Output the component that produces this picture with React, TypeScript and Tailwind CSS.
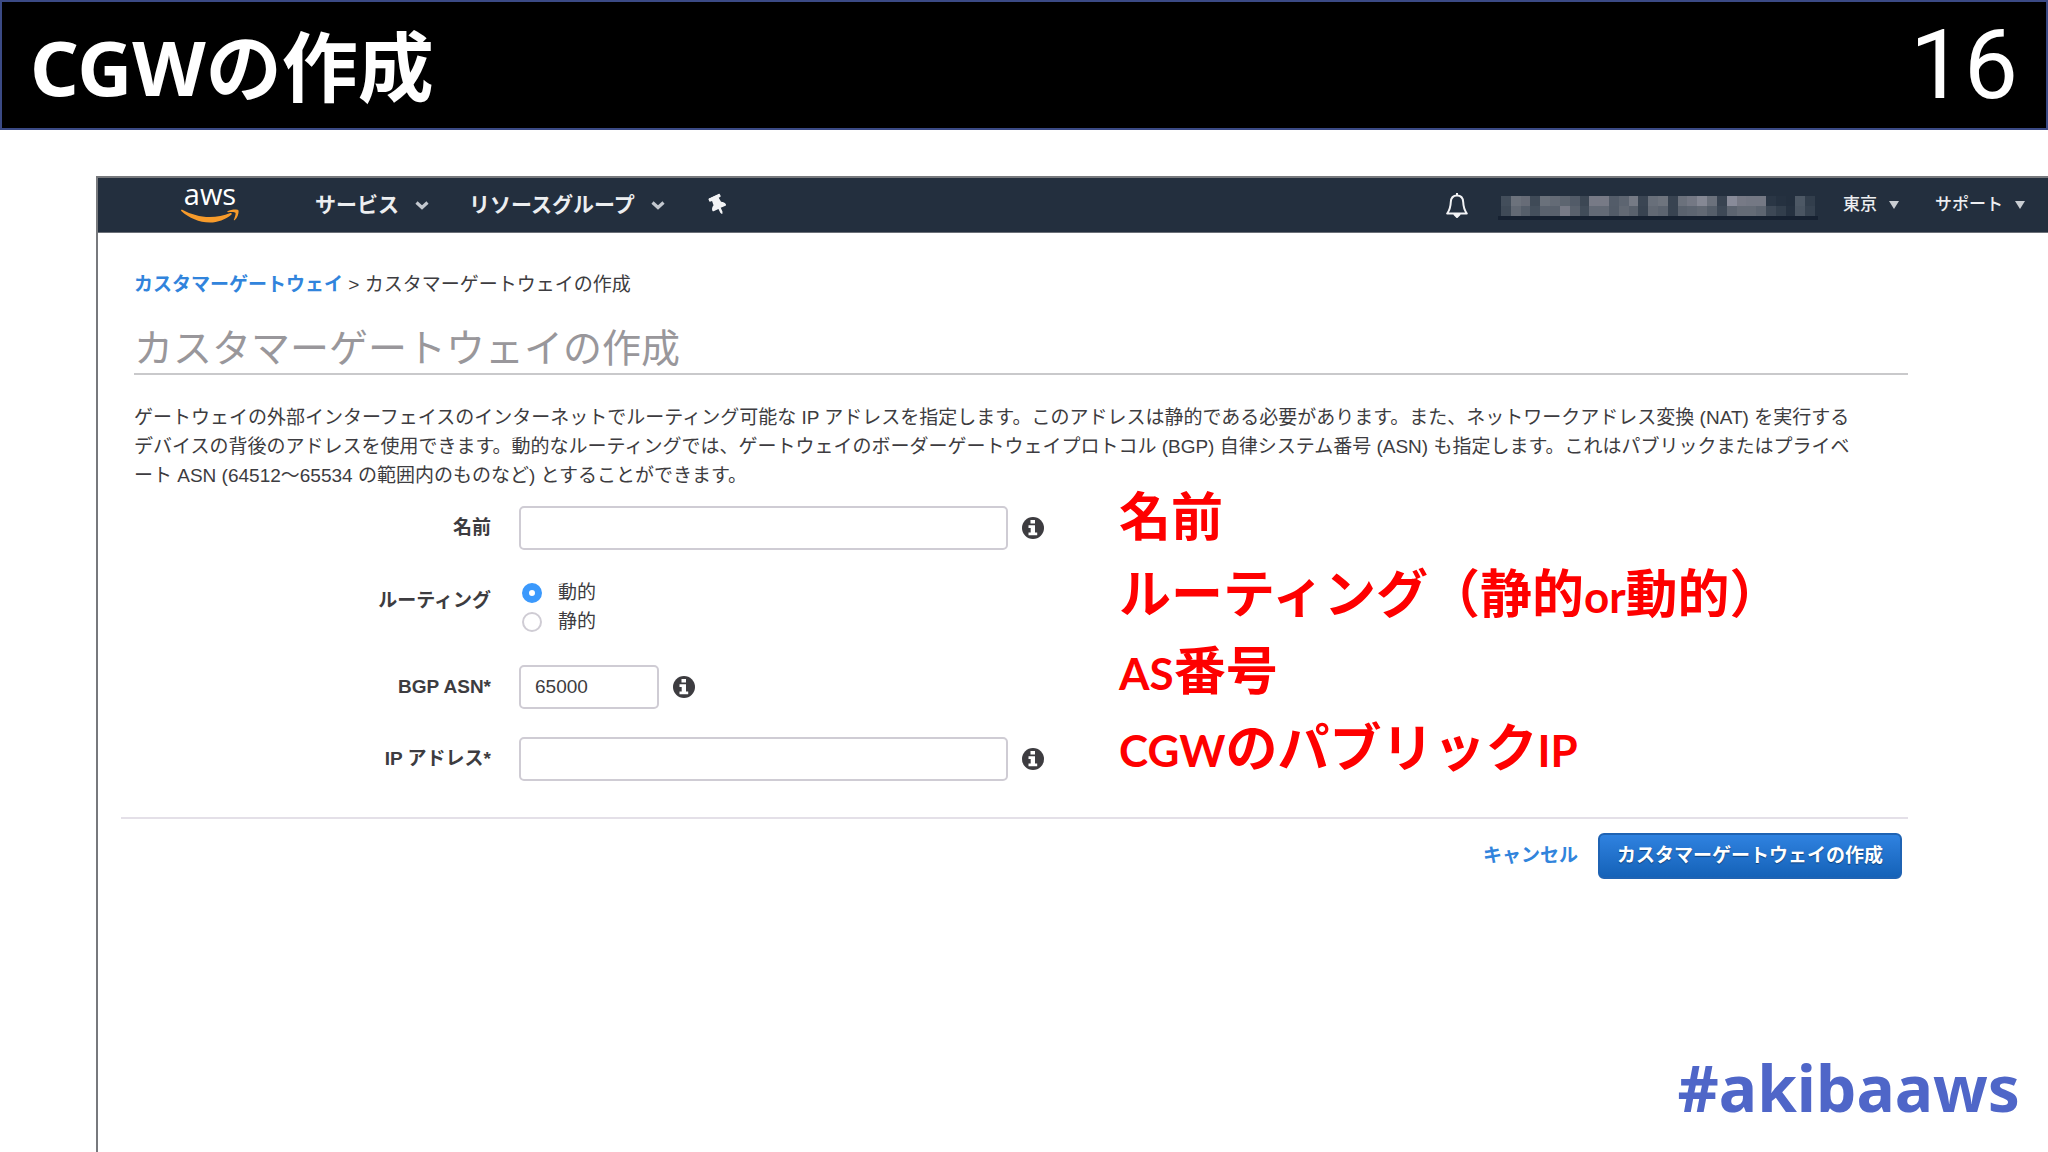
import { useState, type ReactNode } from "react";
import { FaThumbtack } from "react-icons/fa";

const notes: ReactNode[] = [
  "名前",
  <>
    ルーティング（静的<Latin>or</Latin>動的）
  </>,
  <>
    <Latin>AS</Latin>番号
  </>,
  <>
    <Latin>CGW</Latin>のパブリック<Latin>IP</Latin>
  </>
];

// 伏せ字部分のモザイク（上段・下段）
const mosaic = [
  "#434e5b", "#6c727c", "#676c77", "#3f4a57", "#6a717b", "#646b76", "#5d6570", "#525b68",
  "#3c4754", "#777a86", "#777a86", "#535c69", "#5d6571", "#757a85", "#3a4553", "#686f7a",
  "#6e747e", "#384351", "#6b717c", "#747884", "#858894", "#6b717c", "#384351", "#888b99",
  "#777a86", "#747884", "#747884", "#2a3645", "#253140", "#232f3e", "#4d5865", "#323e4c",
  "#3f4a57", "#626974", "#555e6a", "#444f5c", "#5a626e", "#59616d", "#777a86", "#59616d",
  "#414c59", "#636a76", "#636a76", "#525b68", "#626974", "#59616d", "#384351", "#626974",
  "#5c6470", "#384351", "#5a626e", "#5d6571", "#626974", "#555e6a", "#3d4856", "#5c6470",
  "#646b76", "#646b76", "#5d6571", "#3d4856", "#323e4c", "#253140", "#4a5562", "#364250"
];

function Latin({ children }: { children: ReactNode }) {
  return <span className="font-['Lato'] text-[44px] leading-none">{children}</span>;
}

function Chevron() {
  return (
    <svg viewBox="0 0 14 9" className="h-[9px] w-[14px]" fill="none" stroke="#c3c8cf" strokeWidth="3.2">
      <path d="M1.500 1.500 7 6.500l5.500-5" />
    </svg>
  );
}

function Caret() {
  return (
    <svg viewBox="0 0 10 8" className="h-2 w-[10px]" fill="#c9cdd2">
      <path d="M0 0h10L5 8z" />
    </svg>
  );
}

function InfoIcon() {
  return (
    <svg viewBox="0 0 22 22" className="ml-[14px] size-[22px]">
      <circle cx="11" cy="11" r="11" fill="#3d3c40" />
      <path d="M8.500 3h4.500v3.500H8.500zM6.500 8.300H13v7.200h2.200v2.800H6.500v-2.800h2.200v-4.400H6.500z" fill="#fff" />
    </svg>
  );
}

function AwsLogo() {
  return (
    <a href="#" aria-label="aws" className="flex w-[58px] flex-col items-center pb-[6px]">
      <span className="font-['Open_Sans'] text-[29px] leading-[24px] font-medium text-white">aws</span>
      <svg viewBox="0 0 58 14" className="mt-[3px] h-[14px] w-[58px]" fill="#f79b2b">
        <path d="M0 1.200C.3.5 1 .6 1.800 1c8 4.300 17 7 27 7 7 0 14-1.300 20.500-4 1.200-.4 2 .9 1 1.700C44.500 10.500 36.500 13.500 29 13.500 18 13.500 8 9 .5 2.300.1 1.900-.1 1.500 0 1.200z" />
        <path d="M46.500 2.300C49.500.2 56 0 57.200.9c1.200 1.200-.2 7.500-3.400 10.200-.6.5-1.200.2-.9-.5.8-2 2.200-5.900 1.500-6.900-.8-1-4.700-.8-7.300-.5-.8.1-1.100-.5-.6-.9z" />
      </svg>
    </a>
  );
}

function NavBar() {
  return (
    <nav className="flex h-[55px] items-center border-b border-[#6b7078] bg-[#232f3e] pl-[83px] text-[#eceef0]">
      <AwsLogo />
      <button type="button" className="ml-[76px] flex items-center gap-4 text-[21px] font-bold">
        サービス
        <Chevron />
      </button>
      <button type="button" className="ml-10 flex items-center gap-4 text-[21px] font-bold">
        リソースグループ
        <Chevron />
      </button>
      <button type="button" aria-label="pin" className="ml-[43px]">
        <FaThumbtack className="size-5 -rotate-[25deg] text-[#f2f3f5]" />
      </button>
      <div className="ml-auto flex items-center">
        <button type="button" aria-label="bell">
          <svg viewBox="0 0 22 25" className="h-[25px] w-[22px]" fill="none" stroke="#f2f3f5" strokeWidth="2" strokeLinejoin="round">
            <path d="M11 2.500C7 2.500 5 5.500 4.800 9c-.2 5-.8 7.500-3.600 11.500h19.600C18 16.500 17.400 14 17.200 9 17 5.500 15 2.500 11 2.500z" />
            <path d="M8.500 21.500h5L11 24z" fill="#f2f3f5" />
            <path d="M11 0v2.500" />
          </svg>
        </button>
        <div className="mt-[6px] ml-[30px] border-b-4 border-[#162131] px-[3px]">
          <div className="grid w-[314px] grid-cols-[repeat(32,1fr)]">
            {mosaic.map((color, i) => (
              <span key={i} className="h-[10px]" style={{ backgroundColor: color }} />
            ))}
          </div>
        </div>
        <button type="button" className="ml-[25px] flex items-center gap-3 text-[17px] font-medium">
          東京
          <Caret />
        </button>
        <button type="button" className="mr-[23px] ml-9 flex items-center gap-3 text-[17px] font-medium">
          サポート
          <Caret />
        </button>
      </div>
    </nav>
  );
}

type FieldProps = {
  id: string;
  label: string;
  width: string;
  defaultValue?: string;
};

function Field({ id, label, width, defaultValue }: FieldProps) {
  return (
    <div className="flex items-center">
      <label htmlFor={id} className="w-[357px] text-right font-bold">
        {label}
      </label>
      <input
        id={id}
        type="text"
        defaultValue={defaultValue}
        className={`ml-7 h-11 rounded-[5px] border-2 border-[#cfccd4] bg-white px-[14px] ${width}`}
      />
      <InfoIcon />
    </div>
  );
}

function GatewayForm() {
  const [routing, setRouting] = useState("動的");

  return (
    <form className="mt-4 flex flex-col gap-7">
      <Field id="name" label="名前" width="w-[489px]" />
      <fieldset className="flex items-center pb-px">
        <legend className="sr-only">ルーティング</legend>
        <span className="w-[357px] pb-3 text-right font-bold">ルーティング</span>
        <div className="ml-[31px] flex flex-col">
          {["動的", "静的"].map((value) => (
            <label key={value} className="flex items-center gap-4 leading-[29px]">
              <input
                type="radio"
                name="routing"
                value={value}
                checked={routing === value}
                onChange={() => setRouting(value)}
                className="size-5 appearance-none rounded-full border-2 border-[#cfccd4] bg-white checked:border-[7px] checked:border-[#3b99fc]"
              />
              {value}
            </label>
          ))}
        </div>
      </fieldset>
      <Field id="asn" label="BGP ASN*" width="w-[140px]" defaultValue="65000" />
      <Field id="ip" label="IP アドレス*" width="w-[489px]" />
    </form>
  );
}

export default function App() {
  return (
    <div className="flex min-h-screen flex-col bg-white font-['Liberation_Sans','Noto_Sans_CJK_JP',sans-serif] text-[#3d3c40]">
      <header className="flex items-center justify-between border-2 border-[#3b4a85] bg-black px-7 text-white">
        <h1 className="pt-1 font-['Noto_Sans','Noto_Sans_CJK_JP',sans-serif] text-[76px] leading-[122px] font-bold">CGWの作成</h1>
        <span className="font-['Roboto'] text-[96px] leading-[126px]">16</span>
      </header>

      <main className="mt-[46px] ml-24 flex flex-1 flex-col border-t-2 border-l-2 border-[#77797d] text-[19px]">
        <NavBar />
        <div className="pr-[140px] pl-9">
          <p className="mt-[37px] leading-[29px]">
            <a href="#" className="font-bold text-[#3184dc]">
              カスタマーゲートウェイ
            </a>{" "}
            &gt; カスタマーゲートウェイの作成
          </p>
          <h2 className="mt-[26px] border-b-2 border-[#c9c9cb] text-[39px] leading-[48px] text-[#99979b]">
            カスタマーゲートウェイの作成
          </h2>
          <p className="mt-7 leading-[29px]">
            <span className="block">
              ゲートウェイの外部インターフェイスのインターネットでルーティング可能な IP アドレスを指定します。このアドレスは静的である必要があります。また、ネットワークアドレス変換 (NAT) を実行する
            </span>
            <span className="block">
              デバイスの背後のアドレスを使用できます。動的なルーティングでは、ゲートウェイのボーダーゲートウェイプロトコル (BGP) 自律システム番号 (ASN) も指定します。これはパブリックまたはプライベ
            </span>
            <span className="block">ート ASN (64512〜65534 の範囲内のものなど) とすることができます。</span>
          </p>

          <div className="flex items-start">
            <GatewayForm />
            <ul className="ml-[75px] flex flex-col gap-[25px] pt-[2px] text-[52px] leading-[52px] font-bold text-[#fe0000]">
              {notes.map((note, i) => (
                <li key={i}>{note}</li>
              ))}
            </ul>
          </div>
        </div>

        <div className="mt-9 mr-[140px] ml-[23px] flex items-center justify-end gap-5 border-t-2 border-[#e4e0e8] pt-[14px] pr-[6px]">
          <a href="#" className="font-bold text-[#3184dc]">
            キャンセル
          </a>
          <button
            type="button"
            className="h-[46px] rounded-md border-2 border-[#1f63b3] bg-linear-to-b from-[#2f82e0] to-[#1462b8] px-[17px] font-bold text-white [text-shadow:0_1px_1px_#0b3f7c]"
          >
            カスタマーゲートウェイの作成
          </button>
        </div>

        <footer className="mt-auto pr-7 pb-[22px] text-right font-['Noto_Sans'] text-[64px] leading-[84px] font-bold text-[#4f66c8]">
          #akibaaws
        </footer>
      </main>
    </div>
  );
}
